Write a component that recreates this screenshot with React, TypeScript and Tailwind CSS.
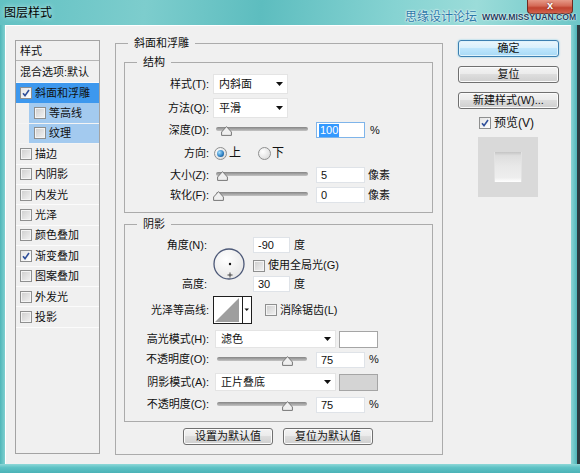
import React from "react";

function Check({ on = false }: { on?: boolean }) {
  return (
    <span
      className={
        on
          ? "flex w-[12px] h-[12px] shrink-0 items-center justify-center border border-[#8e8f8f] bg-[linear-gradient(135deg,#e4e4e4,#ffffff)]"
          : "flex w-[12px] h-[12px] shrink-0 items-center justify-center border border-[#8e8f8f] bg-[linear-gradient(135deg,#cdcdcd,#f3f3f3)] shadow-[inset_0_0_0_1px_#f4f4f4]"
      }
    >
      {on && (
        <svg width="8" height="8" viewBox="0 0 8 8">
          <path d="M1 4.2 L3 6.6 L7 1" stroke="#2f4f9a" strokeWidth="1.6" fill="none" />
        </svg>
      )}
    </span>
  );
}

function Radio({ on = false }: { on?: boolean }) {
  return (
    <span className="flex w-[13px] h-[13px] shrink-0 items-center justify-center rounded-full border border-[#8e8f8f] bg-[radial-gradient(circle_at_35%_35%,#ffffff,#d4d4d4)]">
      {on && (
        <span className="w-[7px] h-[7px] rounded-full bg-[radial-gradient(circle_at_35%_35%,#a6e0ff,#2a7cc0_60%,#0d3f6a)]" />
      )}
    </span>
  );
}

function Arrow() {
  return (
    <svg width="7" height="4" viewBox="0 0 7 4" className="shrink-0">
      <path d="M0 0 H7 L3.5 4 Z" fill="#111" />
    </svg>
  );
}

function Drop({ text, cls }: { text: string; cls: string }) {
  return (
    <div className={cls}>
      <span>{text}</span>
      <Arrow />
    </div>
  );
}

function Slider({ thumb, track }: { thumb: string; track: string }) {
  return (
    <div className="relative w-[96px] h-full shrink-0">
      <div className={track} />
      <svg className={thumb} width="11" height="10" viewBox="0 0 11 10">
        <path d="M5.5 0.6 L10.4 6 L10.4 9.4 L0.6 9.4 L0.6 6 Z" fill="#efefef" stroke="#767676" strokeWidth="1" />
      </svg>
    </div>
  );
}

function Field({ v, cls }: { v: string; cls: string }) {
  return <div className={cls}>{v}</div>;
}

function Btn({ text, cls }: { text: string; cls: string }) {
  return <div className={cls}>{text}</div>;
}

const btnCls =
  "flex items-center justify-center h-[17px] rounded-[3px] border border-[#707070] bg-[linear-gradient(#f3f3f3_0%,#ebebeb_45%,#dddddd_50%,#cfcfcf_100%)] shadow-[inset_0_0_0_1px_#fbfbfb] leading-[15px]";

const rows: { t: string; on?: boolean }[] = [
  { t: "描边" },
  { t: "内阴影" },
  { t: "内发光" },
  { t: "光泽" },
  { t: "颜色叠加" },
  { t: "渐变叠加", on: true },
  { t: "图案叠加" },
  { t: "外发光" },
  { t: "投影" },
];

const fieldCls =
  "flex items-center w-[49px] h-[16px] bg-white border border-[#dfe3e8] pl-[4px] leading-[14px] shrink-0";
const trackA =
  "absolute left-[3px] right-[1px] top-[7px] h-[4px] rounded-full bg-[linear-gradient(#858585,#c4c4c4)]";
const trackB =
  "absolute left-[4px] right-[2px] top-[6px] h-[4px] rounded-full bg-[linear-gradient(#858585,#c4c4c4)]";

export default function App() {
  return (
    <div className="w-[580px] h-[473px] flex flex-col overflow-hidden bg-[#58bcbf] font-['Liberation_Sans','Noto_Sans_CJK_SC',sans-serif] text-[11px] text-[#111]">
      {/* title bar */}
      <div className="relative h-[25px] shrink-0 flex items-center pl-[4px] bg-[linear-gradient(95deg,#62c1c3_0%,#7dcdcd_25%,#5dbdbf_45%,#86d3d2_68%,#9bdcd9_82%,#6cc6c7_100%)]">
        <span className="text-[12px] leading-[16px] text-black [text-shadow:0_0_5px_#dff6f6]">图层样式</span>
        <div className="absolute left-[527px] top-0 w-[46px] h-[14px] rounded-b-[4px] border border-t-0 border-[#6e2a20] bg-[linear-gradient(#e69a88_0%,#d46a56_45%,#c0432f_60%,#d0604b_100%)] flex items-start justify-center">
          <span className="text-white font-bold text-[11px] leading-[11px] [text-shadow:0_0_2px_#5a1a10]">x</span>
        </div>
        <div className="absolute left-[405px] top-[10px] w-[175px] h-[14px] flex items-center gap-[5px] whitespace-nowrap">
          <span className="text-[12px] leading-[14px] text-[#2b78a8] [text-shadow:0_0_2px_#ffffff,0_0_2px_#ffffff]">思缘设计论坛</span>
          <span className="text-[8.6px] leading-[9px] font-bold text-[#22405e] [text-shadow:0_0_2px_#ffffff,0_0_1px_#ffffff]">WWW.MISSYUAN.COM</span>
        </div>
      </div>

      {/* middle */}
      <div className="flex h-[439px] shrink-0">
        <div className="w-[5px] shrink-0 bg-[linear-gradient(90deg,#4fb6b9,#7fd0d0)]" />
        <div className="w-[566px] h-[439px] shrink-0 bg-[#f0f0f0] shadow-[inset_1px_1px_0_#ffffff] flex items-start pl-[10px]">
          {/* left list */}
          <div className="mt-[15px] w-[85px] h-[414px] shrink-0 border border-[#a3a3a3] flex flex-col">
            <div className="h-[20px] shrink-0 border-b border-[#b5b5b5] flex items-center pl-[4px] leading-[16px]">样式</div>
            <div className="h-[22px] shrink-0 border-b border-[#fafafa] flex items-center pl-[4px] leading-[16px]">混合选项:默认</div>
            <div className="h-[20.4px] shrink-0 bg-[#3d98ee] flex items-center pl-[4px] gap-[3px] leading-[16px]">
              <Check on />
              <span>斜面和浮雕</span>
            </div>
            <div className="h-[20.4px] shrink-0 border-b border-[#f4f4f4] flex">
              <div className="ml-[13px] flex-1 bg-[#a3caef] flex items-center pl-[5px] gap-[3px] leading-[16px]">
                <Check />
                <span>等高线</span>
              </div>
            </div>
            <div className="h-[20.4px] shrink-0 border-b border-[#f4f4f4] flex">
              <div className="ml-[13px] flex-1 bg-[#a3caef] flex items-center pl-[5px] gap-[3px] leading-[16px]">
                <Check />
                <span>纹理</span>
              </div>
            </div>
            {rows.map((r) => (
              <div key={r.t} className="h-[20.4px] shrink-0 border-b border-[#fbfbfb] flex items-center pl-[4px] gap-[3px] leading-[16px]">
                <Check on={r.on} />
                <span>{r.t}</span>
              </div>
            ))}
          </div>

          {/* main group */}
          <fieldset className="ml-[15px] mt-[10px] w-[328px] h-[420px] shrink-0 border border-[#ababab]">
            <legend className="ml-[12px] px-[6px] leading-[16px]">斜面和浮雕</legend>

            <fieldset className="ml-[8px] mt-[3px] w-[309px] h-[159px] border border-[#ababab]">
              <legend className="ml-[12px] px-[6px] leading-[16px]">结构</legend>
              <div className="mt-[4px] h-[20px] flex items-center">
                <span className="w-[84px] text-right shrink-0">样式(T):</span>
                <Drop text="内斜面" cls="ml-[4px] w-[75px] h-[20px] flex items-center justify-between bg-white border border-[#e4e4e4] pl-[5px] pr-[4px]" />
              </div>
              <div className="mt-[4px] h-[20px] flex items-center">
                <span className="w-[84px] text-right shrink-0">方法(Q):</span>
                <Drop text="平滑" cls="ml-[4px] w-[75px] h-[20px] flex items-center justify-between bg-white border border-[#e4e4e4] pl-[5px] pr-[4px]" />
              </div>
              <div className="mt-[2px] h-[20px] flex items-center">
                <span className="w-[84px] text-right shrink-0">深度(D):</span>
                <div className="ml-[4px] h-full">
                  <Slider track={trackA} thumb="absolute left-[8px] top-[6px]" />
                </div>
                <div className="ml-[7px] flex items-center w-[49px] h-[16px] bg-white border border-[#7eb4ea] pl-[2px] shrink-0">
                  <span className="bg-[#3399ff] text-white leading-[13px] px-[1px]">100</span>
                </div>
                <span className="ml-[5px]">%</span>
              </div>
              <div className="mt-[3px] h-[20px] flex items-center">
                <span className="w-[84px] text-right shrink-0">方向:</span>
                <span className="ml-[5px]"><Radio on /></span>
                <span className="ml-[2px] text-[12px]">上</span>
                <span className="ml-[17px]"><Radio /></span>
                <span className="ml-[1px] text-[12px]">下</span>
              </div>
              <div className="mt-[2px] h-[20px] flex items-center">
                <span className="w-[84px] text-right shrink-0">大小(Z):</span>
                <div className="ml-[4px] h-full">
                  <Slider track={trackA} thumb="absolute left-[4px] top-[6px]" />
                </div>
                <Field v="5" cls={"ml-[7px] " + fieldCls} />
                <span className="ml-[3px]">像素</span>
              </div>
              <div className="h-[20px] flex items-center">
                <span className="w-[84px] text-right shrink-0">软化(F):</span>
                <div className="ml-[4px] h-full">
                  <Slider track={trackA} thumb="absolute left-[0px] top-[6px]" />
                </div>
                <Field v="0" cls={"ml-[7px] " + fieldCls} />
                <span className="ml-[3px]">像素</span>
              </div>
            </fieldset>

            <fieldset className="ml-[8px] mt-[3px] w-[309px] h-[206px] border border-[#ababab]">
              <legend className="ml-[12px] px-[6px] leading-[16px]">阴影</legend>
              <div className="mt-[5px] h-[55px] flex">
                <div className="w-[82px] shrink-0 flex flex-col justify-between text-right leading-[16px]">
                  <span>角度(N):</span>
                  <span>高度:</span>
                </div>
                <div className="ml-[6px] mt-[11px] w-[32px] h-[32px] shrink-0">
                  <svg width="32" height="32" viewBox="0 0 32 32">
                    <defs>
                      <radialGradient id="dial" cx="40%" cy="35%" r="70%">
                        <stop offset="0%" stopColor="#ffffff" />
                        <stop offset="100%" stopColor="#e6e6e6" />
                      </radialGradient>
                    </defs>
                    <circle cx="16" cy="16" r="15" fill="url(#dial)" stroke="#4c5877" strokeWidth="1.3" />
                    <circle cx="17" cy="16" r="1.2" fill="#111" />
                    <path d="M17 24.5 V29.5 M14.5 27 H19.5" stroke="#333" strokeWidth="0.9" />
                  </svg>
                </div>
                <div className="ml-[8px] flex flex-col">
                  <div className="h-[16px] flex items-center">
                    <Field v="-90" cls="flex items-center w-[37px] h-[16px] bg-white border border-[#dfe3e8] pl-[4px] leading-[14px] shrink-0" />
                    <span className="ml-[4px]">度</span>
                  </div>
                  <div className="mt-[6px] h-[13px] flex items-center">
                    <Check />
                    <span className="ml-[3px] leading-[13px]">使用全局光(G)</span>
                  </div>
                  <div className="mt-auto h-[16px] flex items-center">
                    <Field v="30" cls="flex items-center w-[37px] h-[16px] bg-white border border-[#dfe3e8] pl-[4px] leading-[14px] shrink-0" />
                    <span className="ml-[4px]">度</span>
                  </div>
                </div>
              </div>
              <div className="mt-[4px] h-[28px] flex items-center">
                <span className="w-[84px] text-right shrink-0">光泽等高线:</span>
                <svg className="ml-[4px] shrink-0" width="39" height="28" viewBox="0 0 39 28">
                  <rect x="0.5" y="0.5" width="38" height="27" fill="#ffffff" stroke="#1e1e1e" />
                  <polygon points="2,26 26,2 26,26" fill="#9e9e9e" />
                  <line x1="29.5" y1="1" x2="29.5" y2="27" stroke="#1e1e1e" />
                  <path d="M31.5 12.5 H36 L33.75 15 Z" fill="#111" />
                </svg>
                <span className="ml-[13px]"><Check /></span>
                <span className="ml-[3px]">消除锯齿(L)</span>
              </div>
              <div className="mt-[6px] h-[18px] flex items-center">
                <span className="w-[84px] text-right shrink-0">高光模式(H):</span>
                <Drop text="滤色" cls="ml-[6px] w-[121px] h-[18px] flex items-center justify-between bg-white border border-[#e4e4e4] pl-[5px] pr-[4px] shrink-0" />
                <div className="ml-[3px] w-[39px] h-[17px] bg-white border border-[#a5a5a5] shrink-0" />
              </div>
              <div className="mt-[3px] h-[17px] flex items-center">
                <span className="w-[84px] text-right shrink-0">不透明度(O):</span>
                <div className="ml-[4px] h-full">
                  <Slider track={trackB} thumb="absolute left-[69px] top-[5px]" />
                </div>
                <Field v="75" cls={"ml-[7px] " + fieldCls} />
                <span className="ml-[4px]">%</span>
              </div>
              <div className="mt-[5px] h-[18px] flex items-center">
                <span className="w-[84px] text-right shrink-0">阴影模式(A):</span>
                <Drop text="正片叠底" cls="ml-[6px] w-[121px] h-[18px] flex items-center justify-between bg-white border border-[#e4e4e4] pl-[5px] pr-[4px] shrink-0" />
                <div className="ml-[3px] w-[39px] h-[17px] bg-[#d4d4d4] border border-[#a5a5a5] shrink-0" />
              </div>
              <div className="mt-[5px] h-[17px] flex items-center">
                <span className="w-[84px] text-right shrink-0">不透明度(C):</span>
                <div className="ml-[4px] h-full">
                  <Slider track={trackB} thumb="absolute left-[69px] top-[5px]" />
                </div>
                <Field v="75" cls={"ml-[7px] " + fieldCls} />
                <span className="ml-[4px]">%</span>
              </div>
            </fieldset>

            <div className="mt-[6px] ml-[67px] flex gap-[10px]">
              <Btn text="设置为默认值" cls={"w-[90px] " + btnCls} />
              <Btn text="复位为默认值" cls={"w-[90px] " + btnCls} />
            </div>
          </fieldset>

          {/* right column */}
          <div className="ml-[15px] mt-[15px] w-[101px] shrink-0 flex flex-col">
            <Btn
              text="确定"
              cls="flex items-center justify-center h-[17px] rounded-[3px] border border-[#3c7fb1] bg-[linear-gradient(#eaf6fd_0%,#d9f0fc_45%,#bee6fd_50%,#a7d9f5_100%)] shadow-[inset_0_0_0_1px_#dff3fc,0_0_2px_#6fc8e8] leading-[15px]"
            />
            <Btn text="复位" cls={"mt-[9px] " + btnCls} />
            <Btn text="新建样式(W)..." cls={"mt-[9px] " + btnCls} />
            <div className="mt-[7px] ml-[21px] h-[14px] flex items-center">
              <Check on />
              <span className="ml-[3px] text-[12px] leading-[14px]">预览(V)</span>
            </div>
            <div className="mt-[7px] ml-[20px] w-[60px] h-[60px] bg-[#d9d9d9] flex items-center justify-center">
              <div className="w-[28px] h-[30px] bg-[linear-gradient(#c4c4c4_0%,#dedede_12%,#e9e9e9_50%,#eeeeee_85%,#ffffff_100%)] shadow-[inset_1px_0_0_#e2e2e2,inset_-1px_0_0_#e2e2e2]" />
            </div>
          </div>
        </div>
        <div className="w-[9px] shrink-0 flex">
          <div className="w-[6px] bg-[linear-gradient(90deg,#8dd6d6,#4fb6b9)]" />
          <div className="w-[3px] bg-[#2c3c40]" />
        </div>
      </div>

      {/* bottom frame */}
      <div className="h-[9px] shrink-0 bg-[linear-gradient(#8fd8d8,#5ec2c5_40%,#4bb2b6)]" />
    </div>
  );
}
